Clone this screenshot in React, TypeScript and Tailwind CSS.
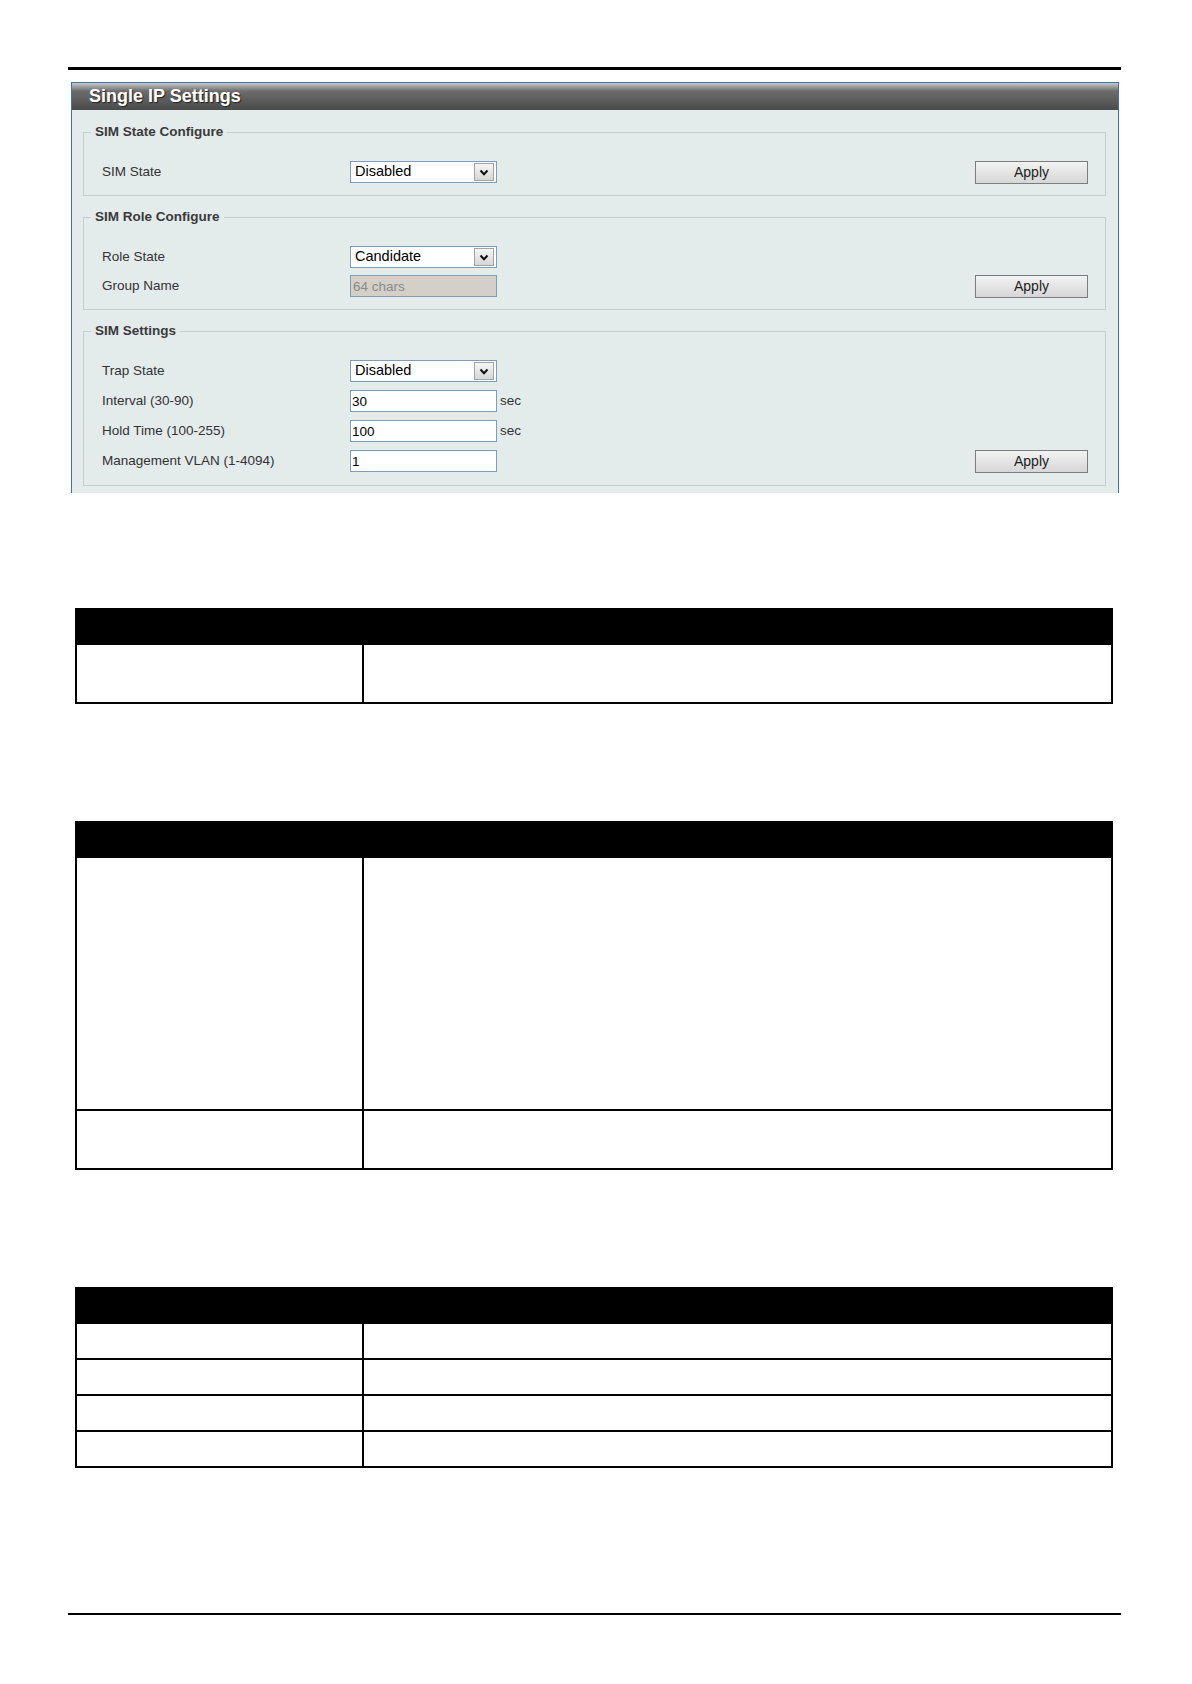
import type { ReactNode } from 'react';

function Select({ value }: { value: string }) {
    return (
        <div className="flex h-[22px] w-[147px] items-center border border-[#7f9db9] bg-white pl-[4px] text-[14.5px] text-black">
            <span>{value}</span>
            <div className="ml-auto mr-[2px] flex h-[18px] w-[20px] items-center justify-center border border-[#a3a3a3] bg-[linear-gradient(to_bottom,#f6f6f6,#d6d6d6)]">
                <svg width="10" height="7" viewBox="0 0 10 7">
                    <polyline points="1.5,1.5 5,5.2 8.5,1.5" fill="none" stroke="#111" strokeWidth="2" />
                </svg>
            </div>
        </div>
    );
}

function TextBox({ value }: { value: string }) {
    return (
        <input
            readOnly
            defaultValue={value}
            className="h-[22px] w-[147px] border border-[#7f9db9] bg-white pl-[1px] text-[13.5px] text-black outline-none"
        />
    );
}

function ApplyButton() {
    return (
        <button className="ml-auto flex h-[23px] w-[113px] items-center justify-center border border-[#7d7d7d] bg-[linear-gradient(to_bottom,#f3f3f3,#d6d6d6)] text-[14px] text-[#222]">
            Apply
        </button>
    );
}

function Row({ label, children, apply, unit }: { label: string; children: ReactNode; apply?: boolean; unit?: string }) {
    return (
        <div className="flex h-[22px] items-center">
            <span className="w-[248px] text-[13.5px] text-[#333]">{label}</span>
            {children}
            {unit && <span className="ml-[3px] text-[13.5px] text-[#333]">{unit}</span>}
            {apply && <ApplyButton />}
        </div>
    );
}

function FieldGroup({ title, children, className = 'gap-[7px] pb-[12px]' }: { title: string; children: ReactNode; className?: string }) {
    return (
        <div className={`relative flex flex-col border border-[#c3cfcf] pl-[18px] pr-[17px] pt-[28px] ${className}`}>
            <span className="absolute -top-[9px] left-[7px] bg-[#e3ebeb] px-[4px] text-[13.5px] font-bold leading-[16px] text-[#3a3a3a]">
                {title}
            </span>
            {children}
        </div>
    );
}

function DocTable({ rows }: { rows: string[] }) {
    return (
        <div className="ml-[75px] w-[1038px]">
            <div className="h-[37px] bg-black" />
            {rows.map((h, i) => (
                <div key={i} className={`flex border-x-2 border-b-2 border-black ${h}`}>
                    <div className="w-[287px] border-r-2 border-black" />
                    <div className="flex-1" />
                </div>
            ))}
        </div>
    );
}

export default function App() {
    return (
        <div className="h-[1684px] w-[1192px] bg-white pt-[67px] font-['Liberation_Sans',Arial,sans-serif]">
            <div className="ml-[68px] h-[3px] w-[1053px] bg-black" />

            {/* Single IP Settings panel */}
            <div className="ml-[71px] mt-[12px] w-[1048px] border-x border-t border-[#3576b0]">
                <div className="flex h-[27px] items-center bg-[linear-gradient(to_bottom,#c9c9c9_0%,#6c6c6c_30%,#4b4b4b_100%)] pl-[17px]">
                    <span className="text-[18px] font-bold text-white [text-shadow:1px_1px_1px_#222]">Single IP Settings</span>
                </div>
                <div className="flex flex-col gap-[21px] bg-[#e3ebeb] pb-[7px] pl-[11px] pr-[12px] pt-[22px]">
                    <FieldGroup title="SIM State Configure">
                        <Row label="SIM State" apply>
                            <Select value="Disabled" />
                        </Row>
                    </FieldGroup>

                    <FieldGroup title="SIM Role Configure">
                        <Row label="Role State">
                            <Select value="Candidate" />
                        </Row>
                        <Row label="Group Name" apply>
                            <input
                                readOnly
                                placeholder="64 chars"
                                className="h-[22px] w-[147px] border border-[#7f9db9] bg-[#d4d0c8] pl-[2px] text-[13.5px] outline-none placeholder:text-[#8a8a8a]"
                            />
                        </Row>
                    </FieldGroup>

                    <FieldGroup title="SIM Settings" className="gap-[8px] pb-[13px]">
                        <Row label="Trap State">
                            <Select value="Disabled" />
                        </Row>
                        <Row label="Interval (30-90)" unit="sec">
                            <TextBox value="30" />
                        </Row>
                        <Row label="Hold Time (100-255)" unit="sec">
                            <TextBox value="100" />
                        </Row>
                        <Row label="Management VLAN (1-4094)" apply>
                            <TextBox value="1" />
                        </Row>
                    </FieldGroup>
                </div>
            </div>

            <div className="mt-[115px]">
                <DocTable rows={['h-[59px]']} />
            </div>
            <div className="mt-[117px]">
                <DocTable rows={['h-[253px]', 'h-[59px]']} />
            </div>
            <div className="mt-[117px]">
                <DocTable rows={['h-[36px]', 'h-[36px]', 'h-[36px]', 'h-[36px]']} />
            </div>

            <div className="ml-[68px] mt-[145px] h-[2px] w-[1053px] bg-black" />
        </div>
    );
}
